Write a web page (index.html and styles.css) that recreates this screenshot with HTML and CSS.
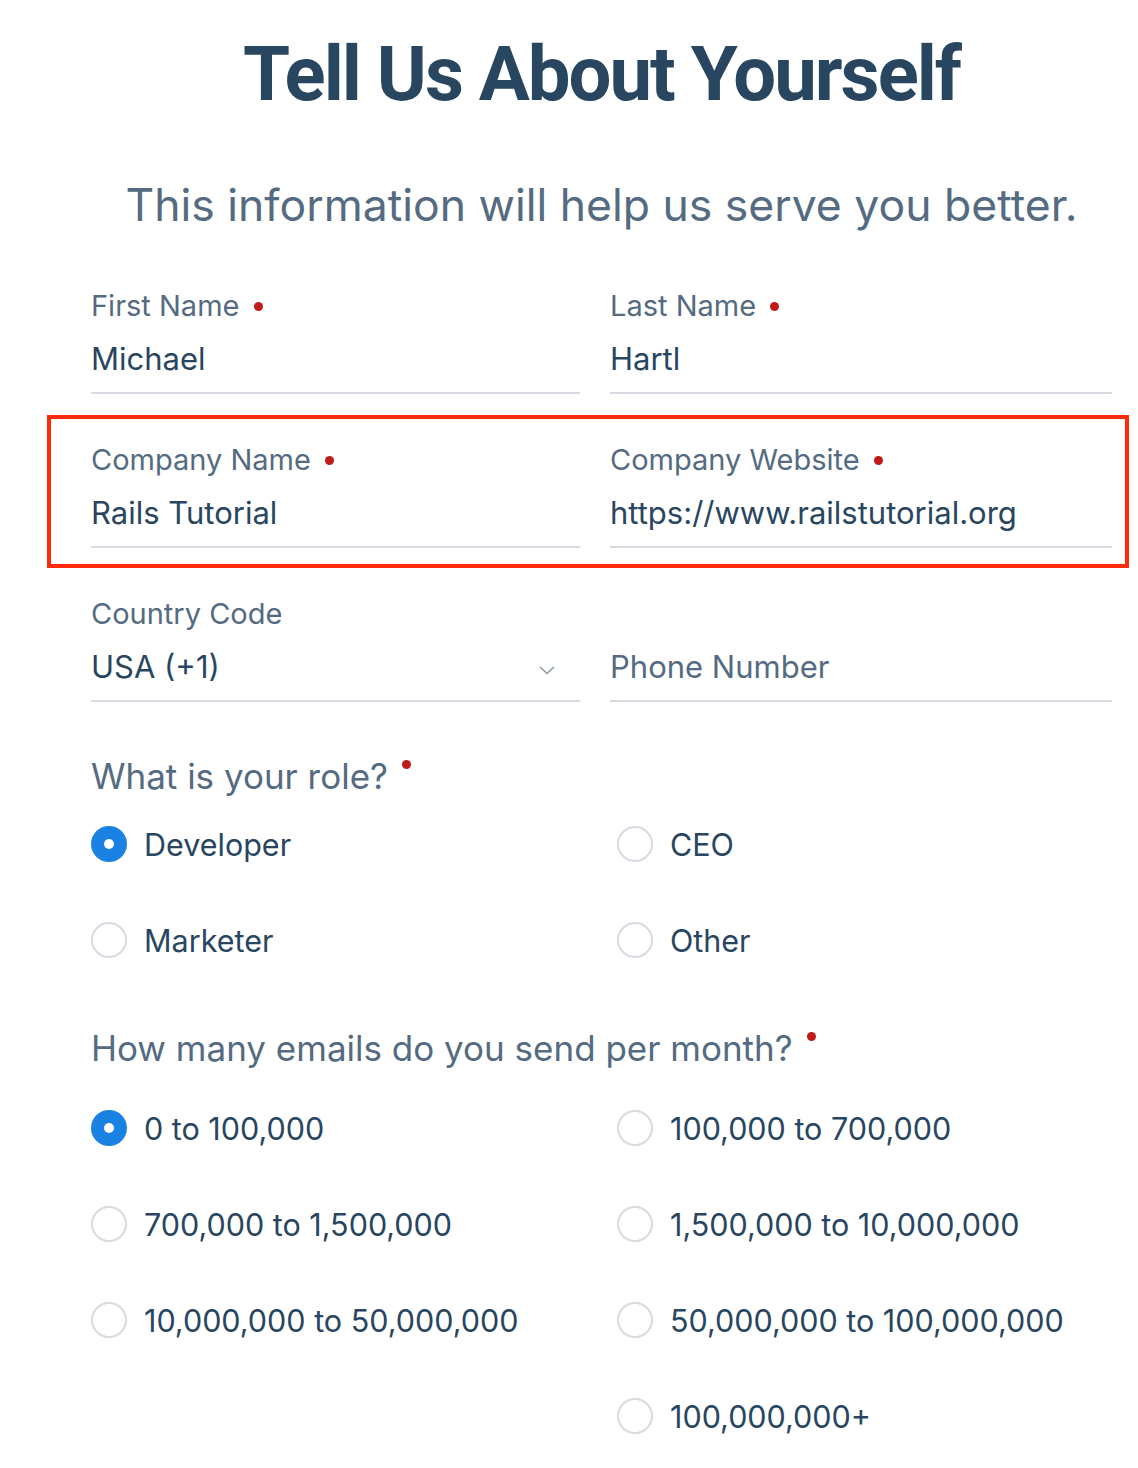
FILE: index.html
```html
<!DOCTYPE html>
<html lang="en">
<head>
<meta charset="utf-8">
<title>Tell Us About Yourself</title>
<link rel="stylesheet" href="styles.css">
</head>
<body>
<main class="page">
  <h1 class="title">Tell Us About Yourself</h1>
  <p class="subtitle">This information will help us serve you better.</p>

  <div class="row row-first">
    <div class="field field-left">
      <div class="label">First Name <span class="req"></span></div>
      <div class="value">Michael</div>
    </div>
    <div class="field">
      <div class="label">Last Name <span class="req"></span></div>
      <div class="value">Hartl</div>
    </div>
  </div>

  <div class="row highlighted">
    <div class="field field-left">
      <div class="label">Company Name <span class="req"></span></div>
      <div class="value">Rails Tutorial</div>
    </div>
    <div class="field">
      <div class="label">Company Website <span class="req"></span></div>
      <div class="value">https://www.railstutorial.org</div>
    </div>
  </div>

  <div class="row">
    <div class="field field-left">
      <div class="label">Country Code</div>
      <div class="value select">
        <span>USA (+1)</span>
        <svg class="chevron" width="18" height="10" viewBox="0 0 18 10"><polyline points="2,2 9,8.5 16,2" fill="none" stroke="#8a9aa9" stroke-width="1.6"/></svg>
      </div>
    </div>
    <div class="field">
      <div class="label">&nbsp;</div>
      <div class="value placeholder">Phone Number</div>
    </div>
  </div>

  <h2 class="question q-role">What is your role? <span class="req sup"></span></h2>
  <div class="radios">
    <div class="radio"><span class="dot checked"></span>Developer</div>
    <div class="radio radio-right"><span class="dot"></span>CEO</div>
    <div class="radio"><span class="dot"></span>Marketer</div>
    <div class="radio radio-right"><span class="dot"></span>Other</div>
  </div>

  <h2 class="question q-emails">How many emails do you send per month? <span class="req sup"></span></h2>
  <div class="radios radios-emails">
    <div class="radio"><span class="dot checked"></span>0 to 100,000</div>
    <div class="radio radio-right"><span class="dot"></span>100,000 to 700,000</div>
    <div class="radio"><span class="dot"></span>700,000 to 1,500,000</div>
    <div class="radio radio-right"><span class="dot"></span>1,500,000 to 10,000,000</div>
    <div class="radio"><span class="dot"></span>10,000,000 to 50,000,000</div>
    <div class="radio radio-right"><span class="dot"></span>50,000,000 to 100,000,000</div>
    <div class="radio"></div>
    <div class="radio radio-right"><span class="dot"></span>100,000,000+</div>
  </div>
</main>
</body>
</html>
```

FILE: styles.css
```css
* { box-sizing: border-box; }

html, body {
  margin: 0;
  padding: 0;
  background: #ffffff;
}

body {
  font-family: Inter, Roboto, "Liberation Sans", sans-serif;
  color: #294661;
}

.page {
  width: 1021px;
  margin-left: 91px;
  padding-top: 36px;
}

.title {
  margin: 0;
  text-align: center;
  font-family: Roboto, "Liberation Sans", sans-serif;
  font-size: 76px;
  line-height: 76px;
  font-weight: 700;
  letter-spacing: -2px;
  color: #294661;
}

.subtitle {
  margin: 65px 0 0;
  text-align: center;
  font-size: 44.5px;
  line-height: 56px;
  font-weight: 400;
  color: #546b81;
}

.row {
  display: grid;
  grid-template-columns: 489px 502px;
  column-gap: 30px;
  margin-top: 49px;
}

.row-first { margin-top: 56px; }

.highlighted {
  position: relative;
}

.highlighted::after {
  content: "";
  position: absolute;
  left: -44px;
  right: -17px;
  top: -28px;
  bottom: -20px;
  border: 4px solid #ff2a0a;
  pointer-events: none;
}

.label {
  font-size: 29px;
  line-height: 34px;
  color: #546b81;
  white-space: nowrap;
}

.req {
  display: inline-block;
  width: 9px;
  height: 9px;
  border-radius: 50%;
  background: #c01a1a;
  vertical-align: middle;
  margin-left: 6px;
  position: relative;
  top: -2px;
}

.req.sup {
  vertical-align: top;
  top: 4px;
  margin-left: 4px;
}

.value {
  margin-top: 16px;
  font-size: 31px;
  line-height: 40px;
  padding-bottom: 13px;
  border-bottom: 2px solid #d5dbe0;
  color: #294661;
  white-space: nowrap;
}

.placeholder {
  color: #546b81;
}

.select {
  display: flex;
  align-items: center;
  justify-content: space-between;
  padding-right: 24px;
}

.chevron {
  margin-top: 6px;
}

.question {
  margin: 54px 0 0;
  font-size: 35px;
  line-height: 40px;
  font-weight: 400;
  color: #546b81;
}

.q-emails {
  margin-top: 40px;
}

.radios {
  display: grid;
  grid-template-columns: 526px 1fr;
  grid-auto-rows: 96px;
}

.radios-emails {
  margin-top: 12px;
}

.radio {
  display: flex;
  align-items: center;
  font-size: 30.5px;
  color: #294661;
  white-space: nowrap;
}

.dot {
  width: 36px;
  height: 36px;
  border-radius: 50%;
  border: 2px solid #d5dbe0;
  margin-right: 17px;
  flex: none;
  background: #fff;
}

.dot.checked {
  border: none;
  background: #1a82e2;
  position: relative;
}

.dot.checked::after {
  content: "";
  position: absolute;
  left: 13px;
  top: 13px;
  width: 10px;
  height: 10px;
  border-radius: 50%;
  background: #fff;
}
```
